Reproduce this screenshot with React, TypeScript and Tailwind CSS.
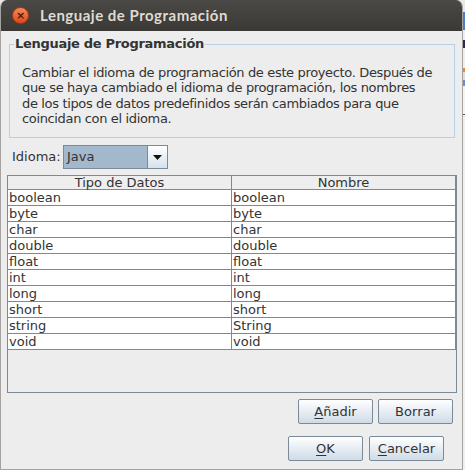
import React from 'react'

const ROWS: [string, string][] = [
  ['boolean', 'boolean'],
  ['byte', 'byte'],
  ['char', 'char'],
  ['double', 'double'],
  ['float', 'float'],
  ['int', 'int'],
  ['long', 'long'],
  ['short', 'short'],
  ['string', 'String'],
  ['void', 'void'],
]

const DESCRIPTION = [
  'Cambiar el idioma de programación de este proyecto. Después de',
  'que se haya cambiado el idioma de programación, los nombres',
  'de los tipos de datos predefinidos serán cambiados para que',
  'coincidan con el idioma.',
]

const FONT = "font-['DejaVu_Sans',sans-serif]"

function MetalButton({ label, mnemonic, width }: { label: string; mnemonic?: number; width: string }) {
  const chars = label.split('')
  return (
    <button
      className={`${width} h-[25px] border border-[#7a8a99] rounded-[2px] bg-gradient-to-b from-[#ffffff] to-[#cfdbe7] text-[13px] text-[#333333] flex items-center justify-center`}
    >
      {chars.map((c, i) => (
        <span key={i} className={i === mnemonic ? 'underline underline-offset-2' : ''}>{c}</span>
      ))}
    </button>
  )
}

export default function App() {
  return (
    <div className={`flex w-[465px] h-[470px] bg-[#e9e9e9] ${FONT}`}>
      <div className="flex flex-col w-[463px] h-[470px] bg-[#ededed] border-x border-b border-[#a5a39f] rounded-t-[7px] overflow-hidden">
        {/* title bar */}
        <div className="h-[31px] flex-shrink-0 flex items-center bg-gradient-to-b from-[#4a4945] to-[#3a3935]">
          <div className="ml-[11px] w-[17px] h-[17px] rounded-full bg-gradient-to-b from-[#f58a5a] to-[#d9461a] border border-[#a83a12] flex items-center justify-center">
            <span className="text-[11px] leading-none font-bold text-[#4a1a08]">×</span>
          </div>
          <span className="ml-[11px] font-['Lato',sans-serif] text-[15px] font-bold text-[#dfdbd2] tracking-[0.5px]">
            Lenguaje de Programación
          </span>
        </div>

        {/* description group */}
        <fieldset className="ml-[8px] mt-[5px] w-[446px] border border-[#b8cfe5] pb-[11px]">
          <legend className="ml-[4px] px-[1px] text-[13px] font-bold leading-[16px] text-[#333333] tracking-[-0.3px]">
            Lenguaje de Programación
          </legend>
          <div className="mt-[13px] ml-[12px] text-[13px] leading-[15.3px] text-[#333333] tracking-[-0.35px] whitespace-nowrap">
            {DESCRIPTION.map((line) => (
              <div key={line}>{line}</div>
            ))}
          </div>
        </fieldset>

        {/* language selector */}
        <div className="mt-[7px] ml-[11px] flex items-center h-[24px]">
          <span className="text-[13px] text-[#333333] w-[51px]">Idioma:</span>
          <div className="flex w-[105px] h-[24px] border border-[#7a8a99] bg-[#a3b8cc]">
            <span className="flex-1 pl-[3px] text-[13px] leading-[22px] text-[#333333]">Java</span>
            <div className="w-[20px] h-full border-l border-[#7a8a99] bg-gradient-to-b from-[#ffffff] to-[#d6e1ec] flex items-center justify-center">
              <svg width="9" height="5" viewBox="0 0 9 5">
                <path d="M0 0h9L4.5 5z" fill="#111111" />
              </svg>
            </div>
          </div>
        </div>

        {/* table */}
        <div className="mt-[6px] ml-[6px] w-[450px] h-[218px] border border-[#7a8a99] flex flex-col">
          <div className="flex h-[14px] bg-[#eeeeee] border-b border-[#7a8a99] text-[13px] leading-[14px] text-[#333333]">
            <div className="w-[224px] border-r border-[#7a8a99] text-center">Tipo de Datos</div>
            <div className="flex-1 text-center border-r border-[#7a8a99]">Nombre</div>
          </div>
          {ROWS.map(([t, n]) => (
            <div key={t} className="flex h-[16px] bg-white border-b border-[#7a8a99] text-[13px] leading-[15px] text-[#333333]">
              <div className="w-[224px] border-r border-[#7a8a99] pl-[1px]">{t}</div>
              <div className="flex-1 pl-[1px] border-r border-[#7a8a99]">{n}</div>
            </div>
          ))}
        </div>

        {/* table actions */}
        <div className="mt-[6px] pr-[9px] flex justify-end gap-[5px]">
          <MetalButton label="Añadir" mnemonic={0} width="w-[75px]" />
          <MetalButton label="Borrar" width="w-[75px]" />
        </div>

        {/* dialog actions */}
        <div className="mt-[12px] pr-[18px] flex justify-end gap-[6px]">
          <MetalButton label="OK" mnemonic={0} width="w-[75px]" />
          <MetalButton label="Cancelar" mnemonic={0} width="w-[75px]" />
        </div>
      </div>

      {/* sliver of the window behind */}
      <div className="flex flex-col w-[2px] h-[470px]">
        <div className="h-[12px] bg-[#e9e9e9]" />
        <div className="h-[18px] bg-[#4f7bc4]" />
        <div className="h-[10px] bg-[#eeeeee]" />
        <div className="h-[8px] bg-[#2c2a55]" />
        <div className="h-[20px] bg-[#eeeeee]" />
        <div className="h-[4px] bg-[#e08a3a]" />
        <div className="h-[8px] bg-[#dcdcdc]" />
        <div className="h-[6px] bg-[#6b8fc9]" />
        <div className="h-[28px] bg-[#f3f3f3]" />
        <div className="h-[1px] bg-[#555555]" />
        <div className="flex-1 bg-[#efefef]" />
      </div>
    </div>
  )
}
